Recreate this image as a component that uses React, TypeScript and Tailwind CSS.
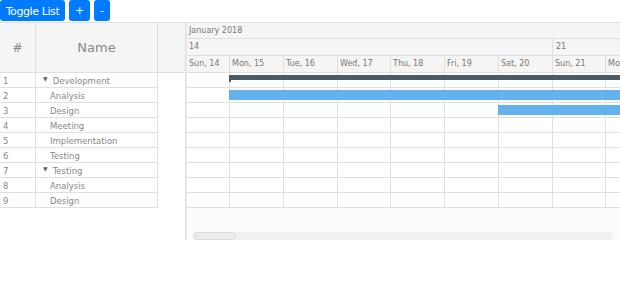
import React from "react";

const rows: { n: number; name: string; parent?: boolean }[] = [
  { n: 1, name: "Development", parent: true },
  { n: 2, name: "Analysis" },
  { n: 3, name: "Design" },
  { n: 4, name: "Meeting" },
  { n: 5, name: "Implementation" },
  { n: 6, name: "Testing" },
  { n: 7, name: "Testing", parent: true },
  { n: 8, name: "Analysis" },
  { n: 9, name: "Design" },
];

const days = [
  { label: "Sun, 14", w: 43 },
  { label: "Mon, 15", w: 54 },
  { label: "Tue, 16", w: 54 },
  { label: "Wed, 17", w: 53 },
  { label: "Thu, 18", w: 54 },
  { label: "Fri, 19", w: 54 },
  { label: "Sat, 20", w: 54 },
  { label: "Sun, 21", w: 53 },
  { label: "Mon, 22", w: 54 },
];

export default function App() {
  return (
    <div
      className="w-[620px] h-[300px] bg-white overflow-hidden text-[#777]"
      style={{ fontFamily: '"DejaVu Sans", sans-serif' }}
    >
      <div className="flex gap-[4px] h-[22px]">
        <button className="h-[21px] w-[65px] rounded-[3px] bg-[#007bff] text-white text-[11px] tracking-[-0.4px] leading-[21px] pt-[1px]">
          Toggle List
        </button>
        <button className="h-[21px] w-[21px] rounded-[3px] bg-[#007bff] text-white text-[11px] leading-[21px]">
          +
        </button>
        <button className="h-[21px] w-[16px] rounded-[3px] bg-[#007bff] text-white text-[11px] leading-[21px]">
          -
        </button>
      </div>
      <div className="flex">
        {/* Left panel */}
        <div className="w-[186px] shrink-0 border-r border-[#e0e0e0]">
          <div className="flex h-[51px] bg-[#f5f5f5] border-t border-b border-[#e0e0e0]">
            <div className="w-[36px] border-r border-[#e0e0e0] flex items-center justify-center text-[12px] text-[#888]">
              #
            </div>
            <div className="w-[122px] border-r border-[#e0e0e0] flex items-center justify-center text-[13px] text-[#888]">
              Name
            </div>
            <div className="flex-1" />
          </div>
          <div className="w-[158px]">
            {rows.map((r) => (
              <div
                key={r.n}
                className="flex h-[15px] border-b border-r border-[#e0e0e0] text-[8.5px] leading-[17px] text-[#888]"
              >
                <div className="w-[36px] border-r border-[#e0e0e0] pl-[3px]">{r.n}</div>
                <div className="flex-1 pl-[7px]">
                  {r.parent ? (
                    <span>
                      <span className="relative top-[-3px] text-[6px] mr-[5px] text-[#666]">▼</span>
                      {r.name}
                    </span>
                  ) : (
                    <span className="pl-[7px]">{r.name}</span>
                  )}
                </div>
              </div>
            ))}
          </div>
        </div>
        {/* Gantt panel */}
        <div className="flex-1 h-[218px] overflow-hidden bg-[#fcfcfc] border-l border-[#ececec] relative">
          <div className="w-[600px]">
            <div className="h-[17px] bg-[#f5f5f5] border-t border-b border-[#e0e0e0] text-[8px] leading-[15px] pl-[2px]">
              January 2018
            </div>
            <div className="flex h-[17px] bg-[#f5f5f5] border-b border-[#e0e0e0] text-[8px] leading-[16px]">
              <div className="w-[366px] border-r border-[#e0e0e0] pl-[2px]">14</div>
              <div className="flex-1 pl-[3px]">21</div>
            </div>
            <div className="flex h-[17px] bg-[#f5f5f5] border-b border-[#e0e0e0] text-[8px] leading-[16px]">
              {days.map((d) => (
                <div
                  key={d.label}
                  className="shrink-0 border-r border-[#e0e0e0] pl-[2px] whitespace-nowrap overflow-hidden"
                  style={{ width: d.w }}
                >
                  {d.label}
                </div>
              ))}
            </div>
            <div className="relative bg-white">
              {rows.map((r) => (
                <div key={r.n} className="flex h-[15px] border-b border-[#e0e0e0]">
                  {days.map((d) => (
                    <div
                      key={d.label}
                      className="shrink-0 border-r border-[#e0e0e0]"
                      style={{ width: d.w }}
                    />
                  ))}
                </div>
              ))}
              <div className="absolute left-[42px] top-[2px] w-[600px] h-[5px] bg-[#4a5a66]" />
              <div className="absolute left-[42px] top-[2px] w-[2px] h-[7px] bg-[#4a5a66]" />
              <div className="absolute left-[42px] top-[17px] w-[600px] h-[10px] bg-[#64b1f0]" />
              <div className="absolute left-[311px] top-[32px] w-[400px] h-[10px] bg-[#64b1f0]" />
            </div>
          </div>
          <div className="absolute left-[6px] top-[210px] w-[420px] h-[8px] rounded-full bg-[#f1f1f1]">
            <div className="w-[43px] h-[8px] rounded-full bg-[#ececec] border border-[#dcdcdc]" />
          </div>
        </div>
      </div>
    </div>
  );
}
